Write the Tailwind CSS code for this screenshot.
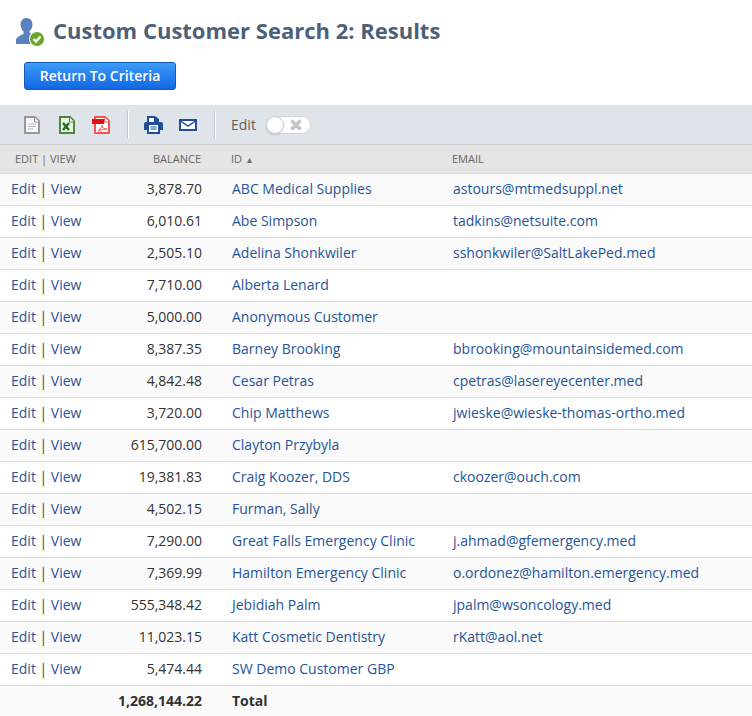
<!DOCTYPE html>
<html lang="en">
  <head>
    <meta charset="UTF-8" />
    <title>Custom Customer Search 2: Results</title>
    <script src="https://cdn.jsdelivr.net/npm/@tailwindcss/browser@4"></script>
  </head>
  <body class="bg-white font-['Open_Sans',sans-serif] text-[14px] text-[#333] overflow-hidden">
    <div class="w-[752px] h-[716px] overflow-hidden">
      <div class="flex items-center h-[62px] pl-[15px] gap-[8px]">
        <svg width="30" height="30" viewBox="0 0 30 30" class="mt-[1px]">
          <path d="M11.500 1c3.600 0 6 2.800 6 6.500 0 2.800-1.100 5-2.800 6.500v2c1.700.5 3.300 1.100 4.800 2L19 27H1v-4c0-2.500 4.500-4.800 7.500-6v-2.500C6.800 13 5.600 10.500 5.600 7.500 5.600 3.800 7.900 1 11.500 1z" fill="#5a82c0"/>
          <circle cx="22" cy="22" r="8" fill="#fff"/>
          <circle cx="22" cy="22" r="7" fill="#6aa52e"/>
          <path d="M18.500 22l2.500 2.600 4.500-5" fill="none" stroke="#fff" stroke-width="2.200"/>
        </svg>
        <h1 class="mb-[2px] text-[22px] leading-none font-bold text-[#4d5f79]">Custom Customer Search 2: Results</h1>
      </div>
      <div class="h-[43px] pl-[24px]">
        <button class="w-[152px] h-[28px] pb-[2px] rounded-[3px] border border-[#125ab2] bg-gradient-to-b from-[#3c9bf7] to-[#1467e4] text-white text-[14px] font-semibold">Return To Criteria</button>
      </div>
      <div class="flex items-center h-[40px] bg-[#dfe4eb] border-b border-[#cccccc]">
        <div class="flex items-center gap-[19px] pl-[24px] w-[127px]">
          <svg width="16" height="18" viewBox="0 0 16 18"><path d="M1 1h10l4 4v12H1z" fill="#f7f7f7" stroke="#999" stroke-width="2"/><path d="M10.500 1v5h4.500" fill="#fff" stroke="#999"/><path d="M4 8h8M4 10.500h8M4 13h5" stroke="#b5bcbc"/></svg>
          <svg width="16" height="18" viewBox="0 0 16 18"><path d="M1 1h10l4 4v12H1z" fill="#eef6e6" stroke="#4a8a3c" stroke-width="2"/><path d="M10.500 1v5h4.500" fill="#fff" stroke="#4a8a3c"/><path d="M4 7l6 7M10 7l-6 7" stroke="#1f6e1f" stroke-width="2.500"/></svg>
          <svg width="19" height="18" viewBox="0 0 19 18" class="ml-[-2px]"><path d="M3 1h10l4 4v12H3z" fill="#fff" stroke="#f55353" stroke-width="2"/><path d="M12.500 1v5h4.500" fill="#fff" stroke="#f55353"/><path d="M0 3h12v5H0z" fill="#e01010"/><path d="M6 15c3-2 4-5 4-6 0 3 2 4 5 4-3 0-6 1-9 2z" fill="none" stroke="#f55353"/></svg>
        </div>
        <div class="w-[2px] h-[27px] bg-[#c4c8cc] border-r border-white"></div>
        <div class="flex items-center gap-[16px] pl-[15px] w-[85px]">
          <svg width="19" height="18" viewBox="0 0 19 18"><path d="M3 0h8l4 3v3h2a2 2 0 0 1 2 2v6h-3v4H3v-4H0V8a2 2 0 0 1 2-2h1z" fill="#1f4f98"/><path d="M5 2h5v4H5zM5 9h9v7H5z" fill="#fff"/><path d="M6.500 11h6M6.500 13h6" stroke="#1f4f98"/></svg>
          <svg width="18" height="12" viewBox="0 0 18 12"><path d="M1 1h16v10H1z" fill="#fff" stroke="#1f4f98" stroke-width="2"/><path d="M1.500 2l7.500 5 7.500-5" fill="none" stroke="#1f4f98" stroke-width="1.500"/></svg>
        </div>
        <div class="w-[2px] h-[27px] bg-[#c4c8cc] border-r border-white"></div>
        <span class="ml-[15px] text-[#6a6058]">Edit</span>
        <div class="relative ml-[10px] w-[45px] h-[18px] rounded-full bg-white border border-[#d5d5d5]">
          <div class="absolute left-[-1px] top-[-1px] w-[18px] h-[18px] rounded-full bg-white border border-[#cccccc] shadow"></div>
          <svg width="14" height="14" viewBox="0 0 14 14" class="absolute left-[22px] top-[1px]"><path d="M2.500 2.500l9 9M11.500 2.500l-9 9" stroke="#c4c4c4" stroke-width="3.500"/></svg>
        </div>
      </div>
      <table class="w-[752px] table-fixed border-collapse">
        <colgroup><col class="w-[92px]" /><col class="w-[110px]" /><col class="w-[30px]" /><col class="w-[221px]" /><col /></colgroup>
        <thead>
          <tr class="h-[28px] bg-[#e5e5e5] border-b border-[#dddddd] text-[11px] text-[#666] uppercase">
            <th class="pl-[15px] text-left font-normal whitespace-nowrap">Edit | View</th>
            <th class="pr-[1px] text-right font-normal">Balance</th>
            <th></th>
            <th class="text-left font-normal indent-[-1px]">ID <span class="text-[9px] text-[#777]">▲</span></th>
            <th class="text-left font-normal indent-[-1px]">Email</th>
          </tr>
        </thead>
        <tbody class="text-[#255599]">
          <tr class="h-[32px] border-b border-[#dddddd] bg-[#fafafa] [&>td]:pb-[2px]"><td class="pl-[11px]">Edit <span class="text-[#444]">|</span> View</td><td class="text-right text-[#333]">3,878.70</td><td></td><td>ABC Medical Supplies</td><td>astours@mtmedsuppl.net</td></tr>
          <tr class="h-[32px] border-b border-[#dddddd] bg-white [&>td]:pb-[2px]"><td class="pl-[11px]">Edit <span class="text-[#444]">|</span> View</td><td class="text-right text-[#333]">6,010.61</td><td></td><td>Abe Simpson</td><td>tadkins@netsuite.com</td></tr>
          <tr class="h-[32px] border-b border-[#dddddd] bg-[#fafafa] [&>td]:pb-[2px]"><td class="pl-[11px]">Edit <span class="text-[#444]">|</span> View</td><td class="text-right text-[#333]">2,505.10</td><td></td><td>Adelina Shonkwiler</td><td>sshonkwiler@SaltLakePed.med</td></tr>
          <tr class="h-[32px] border-b border-[#dddddd] bg-white [&>td]:pb-[2px]"><td class="pl-[11px]">Edit <span class="text-[#444]">|</span> View</td><td class="text-right text-[#333]">7,710.00</td><td></td><td>Alberta Lenard</td><td></td></tr>
          <tr class="h-[32px] border-b border-[#dddddd] bg-[#fafafa] [&>td]:pb-[2px]"><td class="pl-[11px]">Edit <span class="text-[#444]">|</span> View</td><td class="text-right text-[#333]">5,000.00</td><td></td><td>Anonymous Customer</td><td></td></tr>
          <tr class="h-[32px] border-b border-[#dddddd] bg-white [&>td]:pb-[2px]"><td class="pl-[11px]">Edit <span class="text-[#444]">|</span> View</td><td class="text-right text-[#333]">8,387.35</td><td></td><td>Barney Brooking</td><td>bbrooking@mountainsidemed.com</td></tr>
          <tr class="h-[32px] border-b border-[#dddddd] bg-[#fafafa] [&>td]:pb-[2px]"><td class="pl-[11px]">Edit <span class="text-[#444]">|</span> View</td><td class="text-right text-[#333]">4,842.48</td><td></td><td>Cesar Petras</td><td>cpetras@lasereyecenter.med</td></tr>
          <tr class="h-[32px] border-b border-[#dddddd] bg-white [&>td]:pb-[2px]"><td class="pl-[11px]">Edit <span class="text-[#444]">|</span> View</td><td class="text-right text-[#333]">3,720.00</td><td></td><td>Chip Matthews</td><td>jwieske@wieske-thomas-ortho.med</td></tr>
          <tr class="h-[32px] border-b border-[#dddddd] bg-[#fafafa] [&>td]:pb-[2px]"><td class="pl-[11px]">Edit <span class="text-[#444]">|</span> View</td><td class="text-right text-[#333]">615,700.00</td><td></td><td>Clayton Przybyla</td><td></td></tr>
          <tr class="h-[32px] border-b border-[#dddddd] bg-white [&>td]:pb-[2px]"><td class="pl-[11px]">Edit <span class="text-[#444]">|</span> View</td><td class="text-right text-[#333]">19,381.83</td><td></td><td>Craig Koozer, DDS</td><td>ckoozer@ouch.com</td></tr>
          <tr class="h-[32px] border-b border-[#dddddd] bg-[#fafafa] [&>td]:pb-[2px]"><td class="pl-[11px]">Edit <span class="text-[#444]">|</span> View</td><td class="text-right text-[#333]">4,502.15</td><td></td><td>Furman, Sally</td><td></td></tr>
          <tr class="h-[32px] border-b border-[#dddddd] bg-white [&>td]:pb-[2px]"><td class="pl-[11px]">Edit <span class="text-[#444]">|</span> View</td><td class="text-right text-[#333]">7,290.00</td><td></td><td>Great Falls Emergency Clinic</td><td>j.ahmad@gfemergency.med</td></tr>
          <tr class="h-[32px] border-b border-[#dddddd] bg-[#fafafa] [&>td]:pb-[2px]"><td class="pl-[11px]">Edit <span class="text-[#444]">|</span> View</td><td class="text-right text-[#333]">7,369.99</td><td></td><td>Hamilton Emergency Clinic</td><td>o.ordonez@hamilton.emergency.med</td></tr>
          <tr class="h-[32px] border-b border-[#dddddd] bg-white [&>td]:pb-[2px]"><td class="pl-[11px]">Edit <span class="text-[#444]">|</span> View</td><td class="text-right text-[#333]">555,348.42</td><td></td><td>Jebidiah Palm</td><td>jpalm@wsoncology.med</td></tr>
          <tr class="h-[32px] border-b border-[#dddddd] bg-[#fafafa] [&>td]:pb-[2px]"><td class="pl-[11px]">Edit <span class="text-[#444]">|</span> View</td><td class="text-right text-[#333]">11,023.15</td><td></td><td>Katt Cosmetic Dentistry</td><td>rKatt@aol.net</td></tr>
          <tr class="h-[32px] border-b border-[#dddddd] bg-white [&>td]:pb-[2px]"><td class="pl-[11px]">Edit <span class="text-[#444]">|</span> View</td><td class="text-right text-[#333]">5,474.44</td><td></td><td>SW Demo Customer GBP</td><td></td></tr>
          <tr class="h-[30px] bg-[#fafafa] font-bold text-[#333]"><td></td><td class="text-right">1,268,144.22</td><td></td><td>Total</td><td></td></tr>
        </tbody>
      </table>
    </div>
  </body>
</html>
